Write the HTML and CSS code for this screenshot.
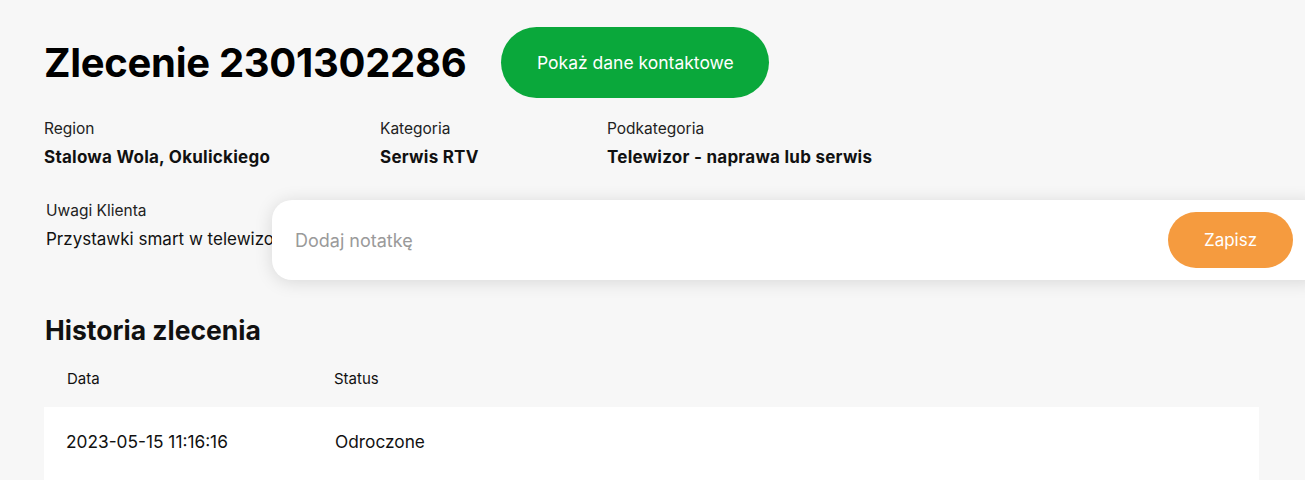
FILE: index.html
```html
<!DOCTYPE html>
<html lang="pl">
<head>
<meta charset="UTF-8">
<meta name="viewport" content="width=device-width, initial-scale=1.0">
<title>Zlecenie 2301302286</title>
<link rel="stylesheet" href="styles.css">
</head>
<body>
    <div class="page">
        <header class="order-head">
            <h1>Zlecenie 2301302286</h1>
            <button class="btn-contact">Pokaż dane kontaktowe</button>
        </header>

        <div class="info">
            <div class="info-item col-region">
                <span class="label">Region</span>
                <span class="value">Stalowa Wola, Okulickiego</span>
            </div>
            <div class="info-item col-cat">
                <span class="label">Kategoria</span>
                <span class="value">Serwis RTV</span>
            </div>
            <div class="info-item">
                <span class="label">Podkategoria</span>
                <span class="value">Telewizor - naprawa lub serwis</span>
            </div>
        </div>

        <div class="remarks">
            <span class="label">Uwagi Klienta</span>
            <p>Przystawki smart w telewizorze</p>
        </div>

        <h2>Historia zlecenia</h2>
        <div class="history">
            <div class="history-head">
                <span class="c-date">Data</span>
                <span>Status</span>
            </div>
            <div class="history-row">
                <span class="c-date">2023-05-15 11:16:16</span>
                <span class="c-status">Odroczone</span>
            </div>
        </div>
    </div>

    <!-- pływające pole notatki -->
    <form class="note" onsubmit="return false">
        <input type="text" placeholder="Dodaj notatkę">
        <button class="btn-save">Zapisz</button>
    </form>
</body>
</html>
```

FILE: styles.css
```css
body, html {
    margin: 0;
    background-color: #f7f7f7;
    color: #111;
    font-family: Inter, "Noto Sans", sans-serif;
}
.page {
    padding: 27px 46px 0 44px;
}
.order-head {
    display: flex;
    align-items: center;
    gap: 35px;
}
.order-head h1 {
    margin: 0;
    font-size: 40px;
    font-weight: 700;
    letter-spacing: -0.3px;
    color: #000;
}
.btn-contact {
    height: 71px;
    width: 268px;
    border: none;
    border-radius: 36px;
    background-color: #0aa83b;
    color: #fff;
    font-family: inherit;
    font-size: 17.5px;
    cursor: pointer;
}
.info {
    display: flex;
    margin-top: 21px;
}
.info-item {
    display: flex;
    flex-direction: column;
    gap: 9px;
}
.col-region {
    width: 336px;
}
.col-cat {
    width: 227px;
}
.label {
    font-size: 15.5px;
    color: #222;
}
.value {
    font-size: 17px;
    font-weight: 700;
    letter-spacing: 0.25px;
}
.remarks {
    margin-top: 33px;
    padding-left: 2px;
}
.remarks p {
    margin: 9px 0 0;
    font-size: 17px;
}
h2 {
    margin: 65px 0 0 1px;
    font-size: 26.5px;
    font-weight: 700;
}
.history-head, .history-row {
    display: flex;
}
.history-head {
    padding: 23px 23px 19px;
    font-size: 15px;
}
.history-row {
    background-color: #fff;
    padding: 24px 22px 40px;
    font-size: 17.3px;
}
.c-date {
    width: 267px;
}
.c-status {
    padding-left: 2px;
}
.note {
    position: absolute;
    top: 200px;
    left: 272px;
    right: -20px;
    height: 80px;
    display: flex;
    align-items: center;
    justify-content: space-between;
    background-color: #fff;
    border-radius: 20px;
    box-shadow: 0 2px 18px rgba(0, 0, 0, 0.13);
    padding: 0 32px 0 23px;
}
.note input {
    border: none;
    outline: none;
    background: none;
    font-family: inherit;
    font-size: 18px;
    color: #333;
    width: 400px;
    padding: 0;
}
.note input::placeholder {
    color: #9a9a9a;
}
.btn-save {
    width: 125px;
    height: 56px;
    border: none;
    border-radius: 28px;
    background-color: #f59b3f;
    color: #fff;
    font-family: inherit;
    font-size: 17px;
    cursor: pointer;
}
```
